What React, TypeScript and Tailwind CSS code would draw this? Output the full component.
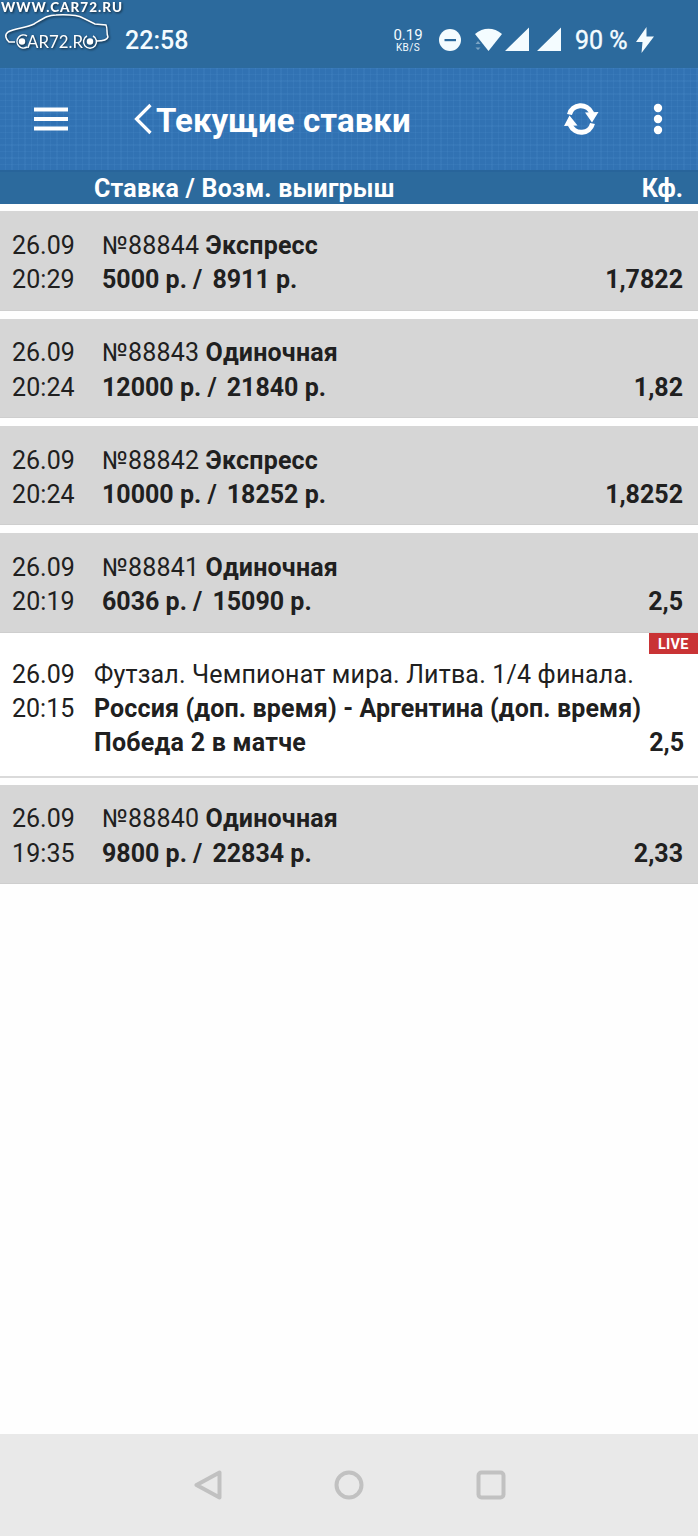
import clsx from "clsx";

type Bet = {
  date: string;
  time: string;
  number: string;
  type: string;
  sum: string;
  win: string;
  odds: string;
};

const bets: Bet[] = [
  { date: "26.09", time: "20:29", number: "№88844", type: "Экспресс", sum: "5000 р. /", win: "8911 р.", odds: "1,7822" },
  { date: "26.09", time: "20:24", number: "№88843", type: "Одиночная", sum: "12000 р. /", win: "21840 р.", odds: "1,82" },
  { date: "26.09", time: "20:24", number: "№88842", type: "Экспресс", sum: "10000 р. /", win: "18252 р.", odds: "1,8252" },
  { date: "26.09", time: "20:19", number: "№88841", type: "Одиночная", sum: "6036 р. /", win: "15090 р.", odds: "2,5" },
];

const lastBet: Bet = {
  date: "26.09",
  time: "19:35",
  number: "№88840",
  type: "Одиночная",
  sum: "9800 р. /",
  win: "22834 р.",
  odds: "2,33",
};

function Watermark() {
  return (
    <svg
      className="absolute left-0 top-0 overflow-visible drop-shadow-[1px_1px_1px_rgba(0,0,0,0.6)]"
      width="126"
      height="54"
      fill="none"
      stroke="#fff"
      strokeWidth="1.5"
    >
      <text x="1" y="12" textLength="121" fill="#fff" stroke="none" fontSize="13.5" fontWeight="900" fontFamily="Lato, sans-serif">
        WWW.CAR72.RU
      </text>
      <path d="M15 42H9C6 39 4 35 8 32C15 28 26 28 34 24C44 18 48 15 56 15C68 14.5 77 14.5 83 18L95 24L106 25C108 29 106 33 108 37C107 40 102 41 97 41" />
      <path d="M27 36A6.5 6.5 0 1 0 27 47" />
      <circle cx="22" cy="41.5" r="2.5" fill="#fff" />
      <text x="27" y="47.5" textLength="56" lengthAdjust="spacingAndGlyphs" fill="#fff" stroke="none" fontSize="16.5" fontFamily="Lato, sans-serif">
        AR72.R
      </text>
      <path d="M87 36A6.5 6.5 0 1 0 93 36" />
      <circle cx="90" cy="41.5" r="2.5" fill="#fff" />
    </svg>
  );
}

function StatusBar() {
  return (
    <div className="relative flex h-[68px] items-center bg-[#2c6a9d] pt-[13px] text-[#f4fcff]">
      <Watermark />
      <span className="ml-[125px] w-[268px] text-[25px] font-medium">22:58</span>
      <div className="flex w-[30px] flex-col items-center whitespace-nowrap">
        <span className="text-[15px] leading-[14px]">0.19</span>
        <span className="text-[10px] leading-[11px] tracking-[0.4px]">KB/S</span>
      </div>
      <svg className="mb-0.5 ml-[15px]" width="126" height="28" fill="currentColor">
        <circle cx="12" cy="14" r="11" />
        <path d="M6.500 13H18v2.200H6.500z" fill="#2c6a9d" />
        <path d="M37 8C45 1 56 1 64 8L50.500 25Z" />
        <path d="M37.500 18L40 15L42.500 18ZM37.500 21.500L40 24L42.500 21.500Z" opacity=".4" />
        <path d="M67 25L91 1.500V25ZM99 25L123 1.500V25Z" />
      </svg>
      <span className="ml-[11px] w-[61px] whitespace-nowrap text-[25px] [-webkit-text-stroke:0.4px_currentColor]">90 %</span>
      <svg className="mb-0.5" width="18" height="26" fill="currentColor">
        <path d="M10.500 0L0 15H6.500L5.500 26L18 9.500H10.500Z" />
      </svg>
    </div>
  );
}

function Header() {
  return (
    <header className="flex h-[102px] items-center bg-[#3172b3] bg-[repeating-linear-gradient(90deg,transparent_0_5px,rgba(90,155,215,0.13)_5px_6.4px),repeating-linear-gradient(0deg,transparent_0_5px,rgba(90,155,215,0.13)_5px_6.4px)] text-white">
      <svg className="ml-[34px]" width="34" height="24" fill="currentColor">
        <path d="M0 .500H34V4.500H0ZM0 10H34V14H0ZM0 19.500H34V23.500H0Z" />
      </svg>
      <svg className="ml-[65px]" width="20" height="32" fill="none" stroke="currentColor" strokeWidth="3.200">
        <path d="M17.500 2L3.500 16L17.500 30" />
      </svg>
      <h1 className="ml-[3px] w-[408px] whitespace-nowrap pt-[3px] text-[33px] font-bold leading-10 tracking-[0.070px]">
        Текущие ставки
      </h1>
      <svg width="36" height="34" fill="none" stroke="currentColor" strokeWidth="5">
        <path d="M5.500 12.500C8 2 23 0 28 11.500M28.500 21.500C26 32 11 34 6 22.500" />
        <path d="M21 10.500L34.500 10L28 20.500ZM0 24L5.500 13.500L13.500 23.500Z" fill="currentColor" stroke="none" />
      </svg>
      <svg className="ml-[53px]" width="10" height="32" fill="currentColor">
        <circle cx="5" cy="5" r="4.200" />
        <circle cx="5" cy="16" r="4.200" />
        <circle cx="5" cy="27" r="4.200" />
      </svg>
    </header>
  );
}

function BetRow({ bet, className }: { bet: Bet; className?: string }) {
  return (
    <div
      className={clsx(
        "flex h-[99.400px] border-b border-[#cecece] bg-[#d6d6d6] pl-3 pr-[15px] pt-[17.600px]",
        className,
      )}
    >
      <div className="w-[90px]">
        <div>{bet.date}</div>
        <div className="tracking-[0.1px]">{bet.time}</div>
      </div>
      <div className="flex-1">
        <div className="tracking-[0.2px]">
          {bet.number} <b className="tracking-[0.2px]">{bet.type}</b>
        </div>
        <div className="flex justify-between font-bold">
          <span>
            {bet.sum}
            <span className="ml-[10px]">{bet.win}</span>
          </span>
          <span>{bet.odds}</span>
        </div>
      </div>
    </div>
  );
}

function LiveRow() {
  return (
    <div className="relative flex h-[145px] border-b-2 border-[#dadada] bg-white pl-3 pr-[14px] pt-[24.700px]">
      <div className="absolute right-0 top-0 h-[21px] w-[49px] bg-[#c93335] pl-[9px] text-[14.500px] font-bold leading-[23px] tracking-[0.2px] text-white">
        LIVE
      </div>
      <div className="w-[82px]">
        <div>26.09</div>
        <div>20:15</div>
      </div>
      <div className="flex-1 whitespace-nowrap">
        <div className="tracking-[0.170px]">Футзал. Чемпионат мира. Литва. 1/4 финала.</div>
        <div className="font-bold tracking-[0.140px]">Россия (доп. время) - Аргентина (доп. время)</div>
        <div className="flex justify-between font-bold">
          <span className="tracking-[0.250px]">Победа 2 в матче</span>
          <span>2,5</span>
        </div>
      </div>
    </div>
  );
}

function NavigationBar() {
  return (
    <nav className="flex h-[102px] items-center bg-[#e9e9e9]">
      <svg className="ml-[194px]" width="28" height="30" fill="none" stroke="#c1c1c1" strokeWidth="4" strokeLinejoin="round">
        <path d="M2.500 15L25.500 2.500V27.500Z" />
      </svg>
      <svg className="ml-[112px]" width="30" height="30" fill="none" stroke="#c1c1c1" strokeWidth="4">
        <circle cx="15" cy="15" r="12.500" />
      </svg>
      <svg className="ml-[112px]" width="30" height="30" fill="none" stroke="#c1c1c1" strokeWidth="4">
        <rect x="2.500" y="2.500" width="25" height="25" rx="3" />
      </svg>
    </nav>
  );
}

export default function App() {
  return (
    <div className="flex h-[1536px] w-[698px] flex-col overflow-hidden bg-[#fefefe] font-['Roboto',sans-serif]">
      <StatusBar />
      <Header />
      <div className="flex h-[34px] justify-between border-t-2 border-[#28649a] bg-[#2c6a9d] pl-[94px] pr-[15px] text-[25px] font-bold leading-[33px] text-white">
        <span className="tracking-[0.220px]">Ставка / Возм. выигрыш</span>
        <span>Кф.</span>
      </div>
      <main className="flex flex-1 flex-col pt-[7.300px] text-[25px] leading-[34.300px] text-[#202020]">
        <div className="flex flex-col gap-2">
          {bets.map((bet) => (
            <BetRow key={bet.number} bet={bet} />
          ))}
        </div>
        <LiveRow />
        <BetRow bet={lastBet} className="mt-[7px]" />
      </main>
      <NavigationBar />
    </div>
  );
}
